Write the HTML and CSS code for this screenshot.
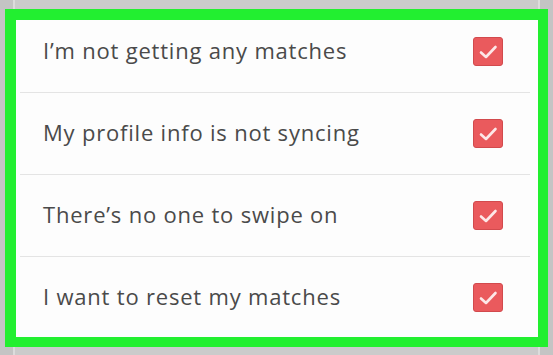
FILE: index.html
```html
<!DOCTYPE html>
<html>
<head>
<meta charset="utf-8">
<link rel="stylesheet" href="styles.css">
</head>
<body>
<div class="backdrop">
  <div class="highlight">
    <div class="viewport">
      <ul class="list">
        <li class="row"><span class="label">I’m not getting any matches</span><span class="check"><svg viewBox="0 0 30 29" width="30" height="29"><path d="M8 15.5 L13 20 L22.5 10" fill="none" stroke="#fde8e8" stroke-width="2.6" stroke-linecap="round" stroke-linejoin="round"/></svg></span></li>
        <li class="row"><span class="label">My profile info is not syncing</span><span class="check"><svg viewBox="0 0 30 29" width="30" height="29"><path d="M8 15.5 L13 20 L22.5 10" fill="none" stroke="#fde8e8" stroke-width="2.6" stroke-linecap="round" stroke-linejoin="round"/></svg></span></li>
        <li class="row"><span class="label">There’s no one to swipe on</span><span class="check"><svg viewBox="0 0 30 29" width="30" height="29"><path d="M8 15.5 L13 20 L22.5 10" fill="none" stroke="#fde8e8" stroke-width="2.6" stroke-linecap="round" stroke-linejoin="round"/></svg></span></li>
        <li class="row"><span class="label">I want to reset my matches</span><span class="check"><svg viewBox="0 0 30 29" width="30" height="29"><path d="M8 15.5 L13 20 L22.5 10" fill="none" stroke="#fde8e8" stroke-width="2.6" stroke-linecap="round" stroke-linejoin="round"/></svg></span></li>
      </ul>
    </div>
  </div>
</div>
</body>
</html>
```
FILE: styles.css
```css
html, body {
  margin: 0;
  padding: 0;
  width: 553px;
  height: 355px;
  overflow: hidden;
  background: #c4c4c4;
}
.backdrop {
  width: 553px;
  height: 355px;
  padding: 9px 5px 8px 5px;
  box-sizing: border-box;
  background: linear-gradient(to right, #c4c4c4 0, #c4c4c4 13px, #dcdcdc 13px, #dcdcdc 15px, #cbcbcb 15px, #cbcbcb 538px, #dcdcdc 538px, #dcdcdc 540px, #c4c4c4 540px);
}
.highlight {
  width: 543px;
  height: 338px;
  box-sizing: border-box;
  border-style: solid;
  border-color: #22ef30;
  border-width: 11px 10px 10px 11px;
  background: #ffffff;
}
.viewport {
  width: 100%;
  height: 100%;
  overflow: hidden;
  background: #fdfdfd;
}
.list {
  list-style: none;
  margin: -9px 0 0 0;
  padding: 0;
}
.row {
  height: 81px;
  border-bottom: 1px solid #e4e4e4;
  display: flex;
  align-items: center;
  justify-content: space-between;
  padding: 0 27px 0 23px;
  margin-left: 4px;
  margin-right: 8px;
}
.label {
  font-family: "Open Sans", "Liberation Sans", sans-serif;
  font-size: 22px;
  color: #4a4a4a;
  letter-spacing: 0.8px;
  margin-top: -3px;
}
.check {
  width: 30px;
  height: 29px;
  box-sizing: border-box;
  border-radius: 3px;
  background: #ea5a5d;
  border: 1px solid #d24a4d;
  position: relative;
}
.check svg {
  display: block;
  position: absolute;
  left: -1px;
  top: -1px;
}
```
